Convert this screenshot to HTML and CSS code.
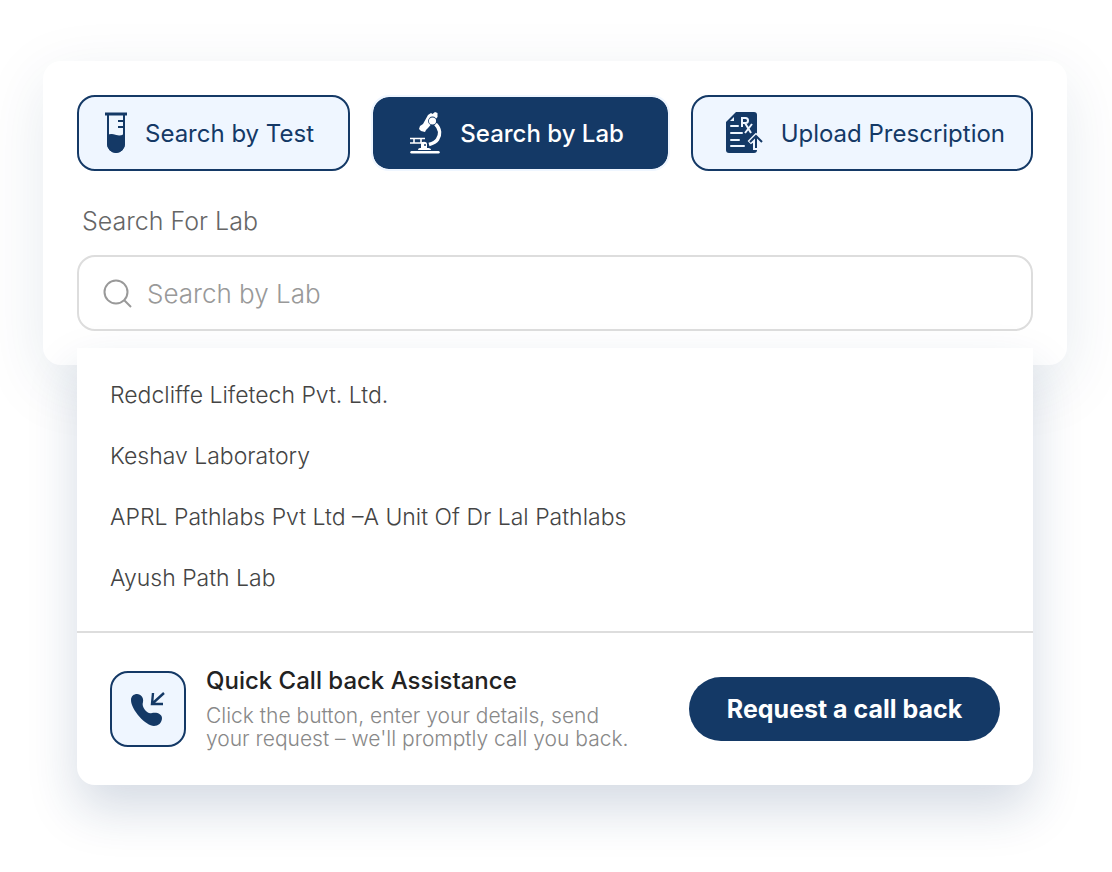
FILE: index.html
```html
<!DOCTYPE html>
<html lang="en">
<head>
  <meta charset="UTF-8" />
  <meta name="viewport" content="width=device-width, initial-scale=1" />
  <title>Search For Lab</title>
  <link rel="stylesheet" href="styles.css">
</head>
<body>

  <main>
    <div class="search-card">
      <div class="tabs">
        <button type="button" class="tab tab-test">
          <svg width="22" height="42" viewBox="0 0 22 42" fill="none" stroke="currentColor" stroke-width="2">
            <path d="M0 2h22" stroke-width="3"/>
            <path d="M3 2v30a8 8 0 0 0 16 0V2M13 9h6M13 15h6"/>
            <path d="M3 24c3-2 5-1 8 0s5 1 8-1v9a8 8 0 0 1-16 0z" fill="currentColor"/>
          </svg>
          Search by Test
        </button>
        <button type="button" class="tab tab-lab active">
          <svg width="32" height="42" viewBox="0 0 32 42" fill="none" stroke="currentColor">
            <path d="M0 26.500h15M0 31h15M4 27v4M11 27v4" stroke-width="1.600"/>
            <path d="M1.500 40.200h27" stroke-width="2.400" stroke-linecap="round"/>
            <path d="M8 38c0-2 2-2 3-2v-4c0-3 6-3 6 0v4c1 0 4 0 4 2z" fill="currentColor" stroke="none"/>
            <circle cx="15" cy="33" r="1" fill="#143966" stroke="none"/>
            <path d="M25.500 12c5 5 5 11 2 15.500-2 3-5 4-8.500 5" stroke-width="3.600"/>
            <path d="M18 3l3-2 1.500 1L25 0l2.500 1v4L18 16l-2 2-1 2-4-1-2-2 1-3 3-2z" fill="currentColor" stroke="none"/>
            <circle cx="22.500" cy="9" r="4.400" fill="#143966" stroke="none"/>
            <circle cx="22.500" cy="9" r="3.600" fill="currentColor" stroke="none"/>
          </svg>
          Search by Lab
        </button>
        <button type="button" class="tab tab-upload">
          <svg width="38" height="42" viewBox="0 0 38 42" fill="none" stroke-width="2">
            <path d="M11 0h18a3 3 0 0 1 3 3v35a3 3 0 0 1-3 3H4a3 3 0 0 1-3-3V10z" fill="currentColor"/>
            <path d="M5 9l4-4v4z" fill="#eff6ff"/>
            <path d="M6 14h7M6 21h11M6 28h8M6 34h13" stroke="#eff6ff" stroke-linecap="round"/>
            <path d="M17 15V6h3.500a2.500 2.500 0 0 1 0 5H17M20 11l6 10M27 12l-7 9" stroke="#eff6ff" stroke-width="2"/>
            <path d="M31 22l-7 7 2 2 3-2v8h5v-8l3 2V27z" fill="#eff6ff" stroke="#eff6ff"/>
            <path d="M31 36V25M25 30l6-6 6 6" stroke="currentColor"/>
          </svg>
          Upload Prescription
        </button>
      </div>

      <form class="search-form">
        <label for="labSearch">Search For Lab</label>
        <div class="search-box">
          <svg width="30" height="30" viewBox="0 0 30 30" fill="none" stroke="currentColor" stroke-width="2">
            <circle cx="13" cy="14" r="11.500"/>
            <path d="M21 22l7 7"/>
          </svg>
          <input type="text" id="labSearch" placeholder="Search by Lab" autocomplete="off" />
        </div>
      </form>
    </div>

    <!-- suggestions -->
    <div class="dropdown">
      <ul class="lab-list">
        <li><button type="button">Redcliffe Lifetech Pvt. Ltd.</button></li>
        <li><button type="button">Keshav Laboratory</button></li>
        <li><button type="button">APRL Pathlabs Pvt Ltd –A Unit Of Dr Lal Pathlabs</button></li>
        <li><button type="button">Ayush Path Lab</button></li>
      </ul>
      <div class="callback">
        <span class="callback-icon">
          <svg width="34" height="34" viewBox="0 0 34 34" fill="none" stroke="currentColor" stroke-width="2">
            <path d="M0 8c0-4 3-6 6-6 4 0 7 4 6 8-1 3 0 5 2 8 2 2 4 4 7 3 5-1 10 1 10 5 0 5-4 8-8 8C15 34 0 18 0 8z" fill="currentColor" stroke="none"/>
            <path d="M33 1L22 11M22 1l-1 11h11" stroke-width="2.400"/>
          </svg>
        </span>
        <div class="callback-text">
          <h2>Quick Call back Assistance</h2>
          <p>Click the button, enter your details, send<br>your request – we'll promptly call you back.</p>
        </div>
        <button type="button" class="callback-btn">Request a call back</button>
      </div>
    </div>
  </main>

</body>
</html>
```
FILE: styles.css
```css
* {
  box-sizing: border-box;
}
body {
  margin: 0;
  min-height: 100vh;
  padding: 61px 45px 61px 43px;
  font-family: Inter, "Liberation Sans", sans-serif;
  background: #fff;
  color: #444;
}
button {
  font-family: inherit;
  cursor: pointer;
}
.search-card {
  padding: 34px;
  background: #fff;
  border-radius: 18px;
  box-shadow: 0 18px 64px rgba(20, 57, 102, 0.1);
}
.tabs {
  display: grid;
  grid-template-columns: 273fr 298fr 342fr;
  gap: 21px;
}
.tab {
  display: flex;
  align-items: center;
  gap: 18px;
  height: 76px;
  padding: 0 0 0 26px;
  border: 2px solid #143966;
  border-radius: 18px;
  background: #eff6ff;
  color: #143966;
  font-size: 24px;
  white-space: nowrap;
}
.tab svg {
  flex: none;
}
.tab-lab {
  padding-left: 37px;
}
.tab-upload {
  padding-left: 32px;
}
.tab.active {
  border-color: #eff6ff;
  background: #143966;
  background-clip: padding-box;
  color: #fff;
  font-weight: 500;
}
.search-form {
  margin-top: 33px;
}
.search-form label {
  display: block;
  padding-left: 5px;
  font-size: 25px;
  line-height: 34px;
  font-weight: 300;
  color: #666;
}
.search-box {
  display: flex;
  align-items: center;
  gap: 14px;
  height: 76px;
  margin-top: 17px;
  padding: 0 24px;
  border: 2px solid #ddd;
  border-radius: 18px;
  color: #999;
}
.search-box input {
  flex: 1;
  min-width: 0;
  padding: 0;
  border: none;
  outline: none;
  background: none;
  font-family: inherit;
  font-size: 26px;
  font-weight: 300;
  color: #444;
}
.search-box input::placeholder {
  color: #999;
}
.dropdown {
  margin: -17px 34px 0;
  background: #fff;
  border-radius: 0 0 18px 18px;
  box-shadow: 0 24px 50px rgba(20, 54, 106, 0.18);
}
.lab-list {
  margin: 0;
  padding: 16px 33px 23px;
  list-style: none;
}
.lab-list button {
  display: block;
  width: 100%;
  height: 61px;
  padding: 0;
  border: none;
  background: none;
  font-size: 23px;
  font-weight: 300;
  text-align: left;
  color: #444;
}
.callback {
  display: flex;
  align-items: center;
  gap: 20px;
  padding: 35px 33px;
  border-top: 2px solid #ddd;
}
.callback-icon {
  display: flex;
  flex: none;
  align-items: center;
  justify-content: center;
  width: 76px;
  height: 76px;
  border: 2px solid #143966;
  border-radius: 18px;
  background: #eff6ff;
  color: #143966;
}
.callback-text {
  flex: 1;
}
.callback-text h2 {
  margin: 0 0 10px;
  font-size: 24px;
  line-height: 26px;
  font-weight: 500;
  color: #222;
}
.callback-text p {
  margin: 0;
  font-size: 21px;
  line-height: 23px;
  font-weight: 300;
  color: #888;
}
.callback-btn {
  flex: none;
  width: 311px;
  height: 64px;
  border: none;
  border-radius: 32px;
  background: #143966;
  color: #fff;
  font-size: 25px;
  font-weight: 700;
}
```
